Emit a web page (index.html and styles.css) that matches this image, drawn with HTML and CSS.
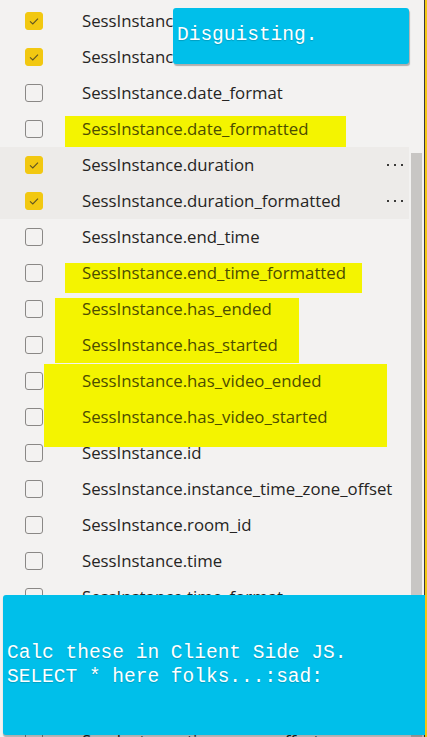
FILE: index.html
```html
<!DOCTYPE html>
<html>
<head>
<meta charset="utf-8">
<link rel="stylesheet" href="styles.css">
</head>
<body>
<div class="frame">
  <div class="hl hl-1"></div>
  <div class="hl hl-2"></div>
  <div class="hl hl-3"></div>
  <div class="hl hl-4"></div>

  <ul class="list">
    <li class="row"><span class="cb on"><svg viewBox="0 0 18 18"><path d="M5 9.3 L7.8 12 L13 6.6"/></svg></span><span class="name">SessInstance.created_at</span></li>
    <li class="row"><span class="cb on"><svg viewBox="0 0 18 18"><path d="M5 9.3 L7.8 12 L13 6.6"/></svg></span><span class="name">SessInstance.date</span></li>
    <li class="row"><span class="cb"></span><span class="name">SessInstance.date_format</span></li>
    <li class="row marked"><span class="cb"></span><span class="name">SessInstance.date_formatted</span></li>
    <li class="row hover"><span class="cb on"><svg viewBox="0 0 18 18"><path d="M5 9.3 L7.8 12 L13 6.6"/></svg></span><span class="name">SessInstance.duration</span><span class="more"><i></i><i></i><i></i></span></li>
    <li class="row hover"><span class="cb on"><svg viewBox="0 0 18 18"><path d="M5 9.3 L7.8 12 L13 6.6"/></svg></span><span class="name">SessInstance.duration_formatted</span><span class="more"><i></i><i></i><i></i></span></li>
    <li class="row"><span class="cb"></span><span class="name">SessInstance.end_time</span></li>
    <li class="row marked"><span class="cb"></span><span class="name">SessInstance.end_time_formatted</span></li>
    <li class="row marked"><span class="cb"></span><span class="name">SessInstance.has_ended</span></li>
    <li class="row marked"><span class="cb"></span><span class="name">SessInstance.has_started</span></li>
    <li class="row marked"><span class="cb"></span><span class="name">SessInstance.has_video_ended</span></li>
    <li class="row marked"><span class="cb"></span><span class="name">SessInstance.has_video_started</span></li>
    <li class="row"><span class="cb"></span><span class="name">SessInstance.id</span></li>
    <li class="row"><span class="cb"></span><span class="name">SessInstance.instance_time_zone_offset</span></li>
    <li class="row"><span class="cb"></span><span class="name">SessInstance.room_id</span></li>
    <li class="row"><span class="cb"></span><span class="name">SessInstance.time</span></li>
    <li class="row"><span class="cb"></span><span class="name">SessInstance.time_format</span></li>
    <li class="row"><span class="cb"></span><span class="name">SessInstance.time_formatted</span></li>
    <li class="row"><span class="cb"></span><span class="name">SessInstance.time_zone</span></li>
    <li class="row"><span class="cb"></span><span class="name">SessInstance.time_zone_name</span></li>
    <li class="row"><span class="cb"></span><span class="name">SessInstance.time_zone_offset</span></li>
  </ul>

  <div class="track"><div class="thumb"></div></div>

  <div class="note note-top">Disguisting.</div>
  <div class="note note-bottom">Calc these in Client Side JS.<br>SELECT * here folks...:sad:</div>
</div>
</body>
</html>
```

FILE: styles.css
```css
* { box-sizing: border-box; }

html, body {
  margin: 0;
  padding: 0;
  width: 427px;
  height: 737px;
  overflow: hidden;
  background: #f3f2f1;
}

.frame {
  position: relative;
  display: flex;
  width: 427px;
  height: 737px;
  border-right: 2px solid #f2c811;
  box-shadow: inset -1px 0 0 #3a3a3a;
  overflow: hidden;
  background: #f3f2f1;
}

.list {
  list-style: none;
  margin: 0;
  padding: 3px 0 0 0;
  width: 409px;
  flex: none;
  font-family: "Open Sans", "Noto Sans", sans-serif;
  font-size: 16.8px;
  color: #252423;
}

.row {
  position: relative;
  z-index: 1;
  display: flex;
  align-items: center;
  height: 36px;
  padding-right: 3px;
}

.row.hover { background: #edebe9; }

.row.marked .name { color: #4c4c00; }

.cb {
  flex: none;
  width: 18px;
  height: 18px;
  margin-left: 25px;
  border: 1px solid #8a8886;
  border-radius: 3px;
  display: flex;
  align-items: center;
  justify-content: center;
}

.cb.on {
  background: #f2c811;
  border-color: #f2c811;
}

.cb svg {
  width: 18px;
  height: 18px;
  flex: none;
}

.cb svg path {
  fill: none;
  stroke: #605523;
  stroke-width: 1.1;
}

.name {
  margin-left: 39px;
  white-space: nowrap;
  line-height: 22px;
}

.more {
  margin-left: auto;
  display: flex;
  gap: 5px;
  padding-right: 3px;
}

.more i {
  display: block;
  width: 2px;
  height: 2px;
  background: #3b3a39;
}

.track {
  width: 16px;
  flex: none;
  padding: 153px 0 0 2px;
}

.thumb {
  width: 11px;
  height: 600px;
  background: #c8c6c4;
}

/* highlighter marks drawn over the list */
.hl {
  position: absolute;
  z-index: 0;
  background: #f4f400;
}
.hl-1 { left: 65px; top: 116px; width: 281px; height: 34px; }
.hl-2 { left: 65px; top: 263px; width: 297px; height: 30px; }
.hl-3 { left: 55px; top: 298px; width: 244px; height: 65px; }
.hl-4 { left: 44px; top: 364px; width: 343px; height: 83px; }

/* sticky notes */
.note {
  position: absolute;
  z-index: 5;
  background: #00bfea;
  color: #ffffff;
  font-family: "Liberation Mono", "DejaVu Sans Mono", monospace;
  font-size: 19.5px;
  text-shadow: 0 1px 1px rgba(0, 0, 0, 0.18);
  white-space: nowrap;
}

.note-top {
  left: 173px;
  top: 8px;
  width: 236px;
  height: 56px;
  border-radius: 3px;
  padding: 15px 0 0 4px;
  line-height: 24px;
  box-shadow: 1px 2px 1px rgba(0, 0, 0, 0.28);
}

.note-bottom {
  left: 3px;
  top: 595px;
  width: 430px;
  height: 140px;
  border-radius: 3px 0 0 3px;
  padding: 46px 0 0 4px;
  line-height: 24px;
  box-shadow: 0 2px 1px rgba(0, 0, 0, 0.28);
}
```
